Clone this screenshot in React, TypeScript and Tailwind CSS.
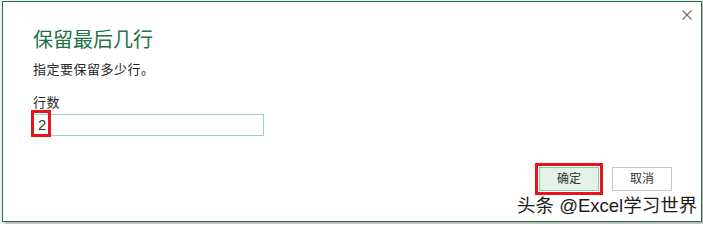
import React from "react";

export default function App() {
  return (
    <div
      className="w-[703px] h-[224px] bg-[#efefef] pl-[2px] pt-[1px] overflow-hidden"
      style={{ fontFamily: '"Liberation Sans", "Noto Sans CJK SC", sans-serif' }}
    >
      <div className="relative w-[700px] h-[221px] bg-white border border-[#217346] flex flex-col shadow-[3px_2px_2px_rgba(0,0,0,0.25)]">
        <div className="flex justify-end pt-[8px] pr-[9px]">
          <svg width="10" height="10" viewBox="0 0 10 10" className="block">
            <path d="M0.5 0.5 L9.5 9.5 M9.5 0.5 L0.5 9.5" stroke="#6e6e6e" strokeWidth="1.1" fill="none" />
          </svg>
        </div>
        <div className="pl-[30px] flex flex-col">
          <div className="mt-[6px] text-[20px] leading-[28px] text-[#217346]">保留最后几行</div>
          <div className="mt-[6px] text-[13px] leading-[20px] tracking-[0.5px] text-[#262626]">指定要保留多少行。</div>
          <div className="mt-[13px] text-[13px] leading-[20px] tracking-[0.5px] text-[#262626]">行数</div>
          <div className="relative mt-[1px] w-[231px] h-[22px]">
            <div className="w-full h-full border border-[#9ed6b6] bg-white flex items-center pl-[4px] text-[15px] text-[#333]">
              2
            </div>
            <div className="absolute left-[-2px] top-[-4px] w-[20px] h-[27px] border-[3px] border-[#e8141c]" />
          </div>
        </div>
        <div className="flex-1" />
        <div className="flex justify-end items-center gap-[9px] pr-[29px] pb-[26px]">
          <div className="border-[3px] border-[#e8141c] p-px">
            <div className="w-[60px] h-[24px] bg-[#e5f2e9] border border-[#8ccaa3] flex items-center justify-center text-[12px] text-[#333]">
              确定
            </div>
          </div>
          <div className="w-[60px] h-[24px] bg-white border border-[#c6c6c6] flex items-center justify-center text-[12px] text-[#333]">
            取消
          </div>
        </div>
        <div className="absolute left-[514px] top-[194px] text-[18.5px] leading-[20px] text-[#1c1c1c] whitespace-nowrap [text-shadow:0_0_2px_#fff,0_0_2px_#fff,0_0_1px_#fff]">
          头条 @Excel学习世界
        </div>
      </div>
    </div>
  );
}
